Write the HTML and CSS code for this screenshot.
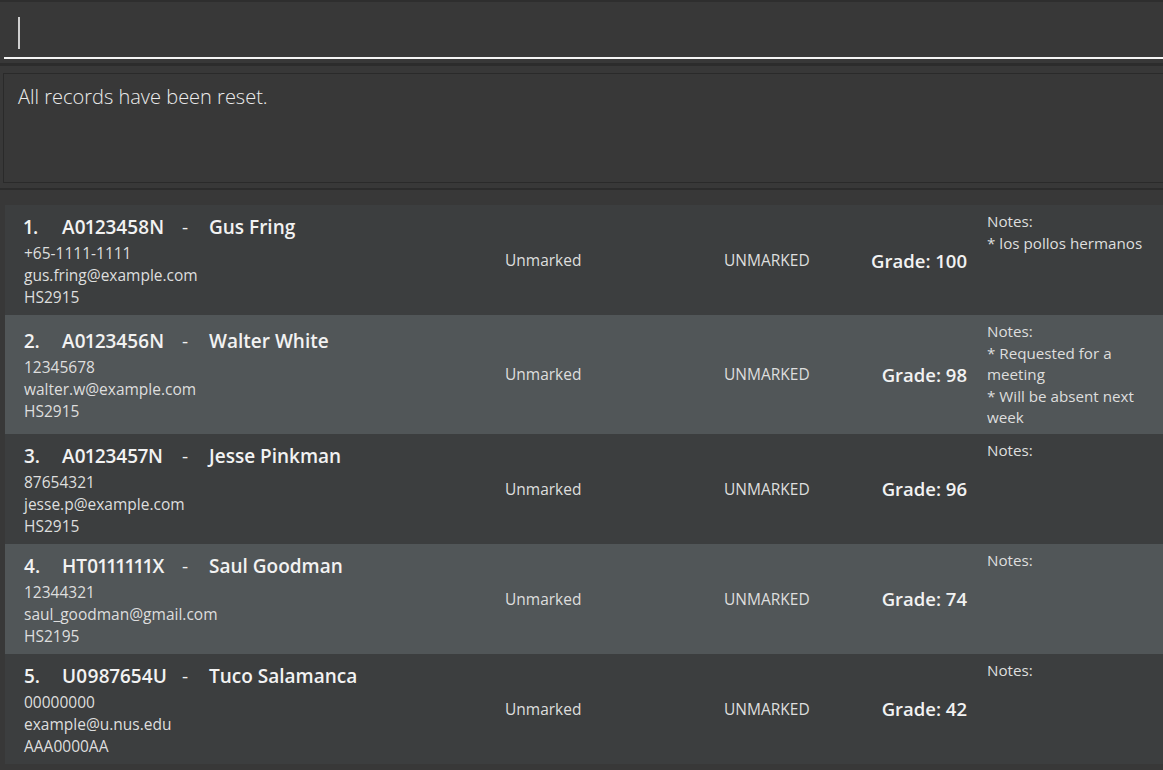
FILE: index.html
```html
<!DOCTYPE html>
<html>
<head>
<meta charset="utf-8">
<link rel="stylesheet" href="styles.css">
</head>
<body>
<div class="app">
  <div class="command-pane">
    <div class="command-box"><span class="caret"></span></div>
  </div>
  <div class="divider"></div>
  <div class="result-pane">
    <div class="result-box">All records have been reset.</div>
  </div>
  <div class="divider small"></div>
  <div class="list-pane">
    <div class="card even">
      <div class="info">
        <div class="title"><span class="idx">1.</span><span class="sid">A0123458N</span><span class="dash">-</span><span class="name">Gus Fring</span></div>
        <div class="line">+65-1111-1111</div>
        <div class="line">gus.fring@example.com</div>
        <div class="line">HS2915</div>
      </div>
      <div class="status">Unmarked</div>
      <div class="status caps">UNMARKED</div>
      <div class="grade">Grade: 100</div>
      <div class="notes">Notes:<br>* los pollos hermanos</div>
    </div>
    <div class="card odd">
      <div class="info">
        <div class="title"><span class="idx">2.</span><span class="sid">A0123456N</span><span class="dash">-</span><span class="name">Walter White</span></div>
        <div class="line">12345678</div>
        <div class="line">walter.w@example.com</div>
        <div class="line">HS2915</div>
      </div>
      <div class="status">Unmarked</div>
      <div class="status caps">UNMARKED</div>
      <div class="grade">Grade: 98</div>
      <div class="notes">Notes:<br>* Requested for a meeting<br>* Will be absent next week</div>
    </div>
    <div class="card even">
      <div class="info">
        <div class="title"><span class="idx">3.</span><span class="sid">A0123457N</span><span class="dash">-</span><span class="name">Jesse Pinkman</span></div>
        <div class="line">87654321</div>
        <div class="line">jesse.p@example.com</div>
        <div class="line">HS2915</div>
      </div>
      <div class="status">Unmarked</div>
      <div class="status caps">UNMARKED</div>
      <div class="grade">Grade: 96</div>
      <div class="notes">Notes:</div>
    </div>
    <div class="card odd">
      <div class="info">
        <div class="title"><span class="idx">4.</span><span class="sid">HT0111111X</span><span class="dash">-</span><span class="name">Saul Goodman</span></div>
        <div class="line">12344321</div>
        <div class="line">saul_goodman@gmail.com</div>
        <div class="line">HS2195</div>
      </div>
      <div class="status">Unmarked</div>
      <div class="status caps">UNMARKED</div>
      <div class="grade">Grade: 74</div>
      <div class="notes">Notes:</div>
    </div>
    <div class="card even">
      <div class="info">
        <div class="title"><span class="idx">5.</span><span class="sid">U0987654U</span><span class="dash">-</span><span class="name">Tuco Salamanca</span></div>
        <div class="line">00000000</div>
        <div class="line">example@u.nus.edu</div>
        <div class="line">AAA0000AA</div>
      </div>
      <div class="status">Unmarked</div>
      <div class="status caps">UNMARKED</div>
      <div class="grade">Grade: 42</div>
      <div class="notes">Notes:</div>
    </div>
  </div>
</div>
</body>
</html>
```
FILE: styles.css
```css
* { box-sizing: border-box; }
html, body {
  margin: 0;
  padding: 0;
  background: #383838;
  height: 100%;
  overflow: hidden;
}
body {
  font-family: "Open Sans", "Noto Sans", sans-serif;
  color: #e6e6e6;
}
.app {
  display: flex;
  flex-direction: column;
  border-top: 2px solid #2e2e2e;
}
.command-pane {
  height: 61px;
  padding: 0 0 4px 4px;
  display: flex;
  flex-direction: column;
  justify-content: flex-end;
}
.command-box {
  height: 55px;
  border-bottom: 2px solid #f4f4f4;
  padding: 13px 0 0 14px;
}
.caret {
  display: block;
  width: 2px;
  height: 32px;
  background: #cfcfcf;
}
.divider {
  height: 3px;
  background: #2c2c2c;
}
.divider.small {
  height: 2px;
}
.result-pane {
  padding: 7px 0 5px 3px;
}
.result-box {
  height: 110px;
  border: 1px solid #2a2a2a;
  border-right: none;
  padding: 10px 14px 8px;
  font-size: 20px;
  font-weight: 300;
  color: #ececec;
  line-height: 26px;
}
.list-pane {
  padding: 15px 0 0 5px;
  display: flex;
  flex-direction: column;
}
.card {
  display: grid;
  grid-template-columns: 481px 219px 140px 103px 1fr;
  padding: 5px 8px 5px 19px;
  min-height: 110px;
}
.card.even { background: #3c3e3f; }
.card.odd { background: #515658; }
.info {
  align-self: center;
  padding: 2px 0;
}
.title {
  font-size: 19px;
  font-weight: 600;
  color: #f2f2f2;
  line-height: 30px;
  white-space: nowrap;
  font-variant-numeric: proportional-nums;
}
.idx { display: inline-block; width: 38px; }
.sid { display: inline-block; width: 111px; }
.dash { display: inline-block; width: 24px; text-align: center; margin-right: 12px; font-weight: 400; }
.line {
  font-size: 15.5px;
  line-height: 22px;
  color: #dedede;
}
.status {
  align-self: center;
  font-size: 15.5px;
  color: #dedede;
}
.grade {
  align-self: center;
  text-align: right;
  font-size: 18.5px;
  font-weight: 600;
  color: #f2f2f2;
}
.notes {
  padding-top: 1px;
  padding-left: 20px;
  font-size: 15.2px;
  line-height: 21.5px;
  color: #dedede;
}
```
